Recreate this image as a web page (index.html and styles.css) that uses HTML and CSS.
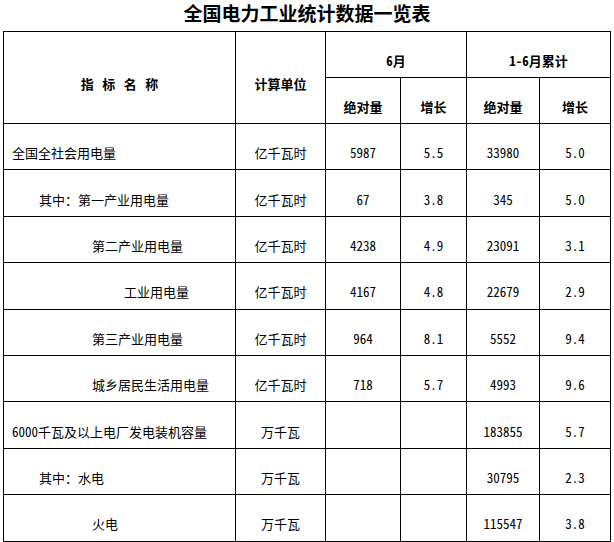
FILE: index.html
```html
<!DOCTYPE html>
<html lang="zh-CN">
<head>
<meta charset="utf-8">
<title>全国电力工业统计数据一览表</title>
<link rel="stylesheet" href="styles.css">
</head>
<body>
<div class="page">
  <h1 class="title">全国电力工业统计数据一览表</h1>
  <table class="stats">
    <colgroup>
      <col class="c-name">
      <col class="c-unit">
      <col class="c-abs1">
      <col class="c-gr1">
      <col class="c-abs2">
      <col class="c-gr2">
    </colgroup>
    <thead>
      <tr>
        <th rowspan="2" class="spaced">指 标 名 称</th>
        <th rowspan="2">计算单位</th>
        <th colspan="2">6月</th>
        <th colspan="2">1-6月累计</th>
      </tr>
      <tr>
        <th>绝对量</th>
        <th>增长</th>
        <th>绝对量</th>
        <th>增长</th>
      </tr>
    </thead>
    <tbody>
      <tr><td class="name l0">全国全社会用电量</td><td>亿千瓦时</td><td>5987</td><td>5.5</td><td>33980</td><td>5.0</td></tr>
      <tr><td class="name l1">其中：第一产业用电量</td><td>亿千瓦时</td><td>67</td><td>3.8</td><td>345</td><td>5.0</td></tr>
      <tr><td class="name l2">第二产业用电量</td><td>亿千瓦时</td><td>4238</td><td>4.9</td><td>23091</td><td>3.1</td></tr>
      <tr><td class="name l3">工业用电量</td><td>亿千瓦时</td><td>4167</td><td>4.8</td><td>22679</td><td>2.9</td></tr>
      <tr><td class="name l2">第三产业用电量</td><td>亿千瓦时</td><td>964</td><td>8.1</td><td>5552</td><td>9.4</td></tr>
      <tr><td class="name l2">城乡居民生活用电量</td><td>亿千瓦时</td><td>718</td><td>5.7</td><td>4993</td><td>9.6</td></tr>
      <tr><td class="name l0">6000千瓦及以上电厂发电装机容量</td><td>万千瓦</td><td></td><td></td><td>183855</td><td>5.7</td></tr>
      <tr><td class="name l1">其中：水电</td><td>万千瓦</td><td></td><td></td><td>30795</td><td>2.3</td></tr>
      <tr><td class="name l2">火电</td><td>万千瓦</td><td></td><td></td><td>115547</td><td>3.8</td></tr>
    </tbody>
  </table>
</div>
</body>
</html>
```

FILE: styles.css
```css
html, body {
  margin: 0;
  padding: 0;
  background: #fff;
}

.page {
  padding-left: 3px;
  font-family: "Noto Sans Mono CJK SC", "Noto Sans CJK SC", sans-serif;
  color: #000;
}

.title {
  margin: 0;
  height: 31px;
  line-height: 25px;
  font-size: 19px;
  font-weight: 700;
  text-align: center;
  font-family: "Noto Sans CJK SC", sans-serif;
  width: 608px;
}

.stats {
  border-collapse: collapse;
  table-layout: fixed;
  width: 608px;
  font-size: 13px;
}

.c-name { width: 232px; }
.c-unit { width: 90px; }
.c-abs1 { width: 75px; }
.c-gr1 { width: 66px; }
.c-abs2 { width: 73px; }
.c-gr2 { width: 71px; }

.stats th,
.stats td {
  border: 1px solid #000;
  padding: 13px 0 0;
  text-align: center;
  vertical-align: middle;
  line-height: 16px;
  white-space: nowrap;
}

.stats th {
  font-weight: 700;
  height: 46px;
  box-sizing: border-box;
}

.stats td {
  height: 46.4px;
  box-sizing: border-box;
  font-weight: 400;
}

.stats th.spaced {
  word-spacing: 2px;
}

.stats td.name {
  text-align: left;
}

.stats td.l0 { padding-left: 8px; }
.stats td.l1 { padding-left: 35px; }
.stats td.l2 { padding-left: 88px; }
.stats td.l3 { padding-left: 120px; }
```
